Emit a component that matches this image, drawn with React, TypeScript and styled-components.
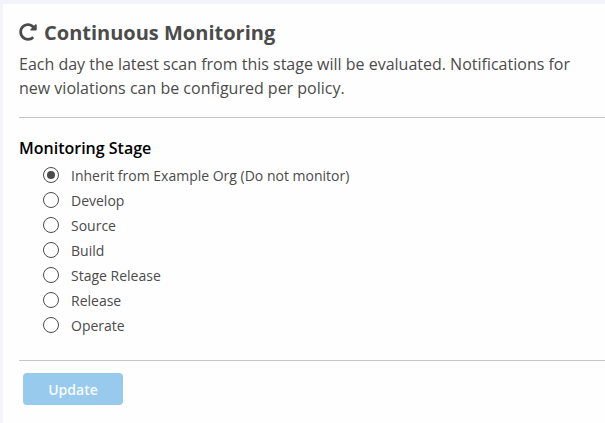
import React, { useState } from "react";
import styled, { createGlobalStyle } from "styled-components";
import { FaRedoAlt } from "react-icons/fa";

const GlobalStyle = createGlobalStyle`
  *, *::before, *::after { box-sizing: border-box; }
  html, body { margin: 0; background: #f3f4fb; overflow: hidden; }
  body { font-family: "Open Sans", "Noto Sans", sans-serif; color: #4b4b4b; }
`;

const Page = styled.div`
  height: 423px;
  padding: 4px 0 0 3px;
  overflow: hidden;
`;

const Tile = styled.main`
  height: 100%;
  padding: 17px 0 0 16px;
  background: #fefefe;
`;

const Header = styled.header`
  display: flex;
  align-items: center;
  height: 24px;
  gap: 7px;
`;

const RefreshIcon = styled(FaRedoAlt)`
  width: 18px;
  height: 18px;
  margin-top: -2px;
`;

const Title = styled.h2`
  margin: 0;
  font-size: 20px;
  line-height: 24px;
  font-weight: 700;
`;

const Description = styled.p`
  width: 570px;
  margin: 7px 0 0;
  font-size: 16px;
  line-height: 24px;
`;

const Divider = styled.hr`
  height: 1px;
  margin: 17px 0 0;
  border: 0;
  background: #c6c6c6;
`;

const StageFieldset = styled.fieldset`
  margin: 18px 0 22px;
  padding: 0 0 1px;
  border: 0;
`;

const Legend = styled.legend`
  padding: 0 0 2px;
  font-size: 16px;
  line-height: 24px;
  font-weight: 600;
  color: #000;
`;

const Option = styled.label`
  display: flex;
  align-items: center;
  height: 25px;
  padding-left: 24px;
  gap: 12px;
  font-size: 14px;
  line-height: 27px;
`;

const Radio = styled.input`
  appearance: none;
  display: grid;
  place-items: center;
  flex: none;
  width: 16px;
  height: 16px;
  margin: 0;
  border: 1px solid #4b4b4b;
  border-radius: 50%;
  background: #fff;

  &:checked::before {
    content: "";
    width: 8px;
    height: 8px;
    border-radius: 50%;
    background: #4b4b4b;
  }
`;

const OptionText = styled.span`
  height: 25px;
`;

const UpdateButton = styled.button`
  display: block;
  width: 100px;
  height: 32px;
  margin: 12px 0 0 4px;
  padding: 1px 0 0;
  border: 0;
  border-radius: 4px;
  background: #97caed;
  color: #f8fbfe;
  font: 600 14px/20px "Open Sans", sans-serif;
`;

const stages = [
  "Inherit from Example Org (Do not monitor)",
  "Develop",
  "Source",
  "Build",
  "Stage Release",
  "Release",
  "Operate",
];

export default function App() {
  const [selected, setSelected] = useState(stages[0]);
  return (
    <>
      <GlobalStyle />
      <Page>
        <Tile>
          <Header>
            <RefreshIcon />
            <Title>Continuous Monitoring</Title>
          </Header>
          <Description>
            Each day the latest scan from this stage will be evaluated. Notifications for new
            violations can be configured per policy.
          </Description>
          <Divider />
          <StageFieldset>
            <Legend>Monitoring Stage</Legend>
            {stages.map((stage) => (
              <Option key={stage}>
                <Radio
                  type="radio"
                  name="stage"
                  checked={stage === selected}
                  onChange={() => setSelected(stage)}
                />
                <OptionText>{stage}</OptionText>
              </Option>
            ))}
          </StageFieldset>
          <Divider />
          <UpdateButton type="button" disabled>
            Update
          </UpdateButton>
        </Tile>
      </Page>
    </>
  );
}
